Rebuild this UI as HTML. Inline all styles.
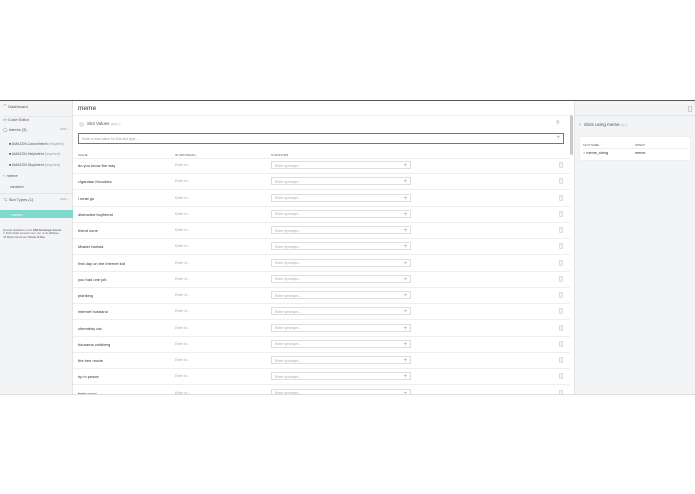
<!DOCTYPE html>
<html><head><meta charset="utf-8"><style>
*{margin:0;padding:0;box-sizing:border-box}
body{width:695px;height:494px;background:#fff;position:relative;overflow:hidden;font-family:"Liberation Sans",sans-serif;color:#333}
.a{position:absolute;white-space:nowrap}
#app{position:absolute;left:0;top:100px;width:695px;height:295px;overflow:hidden;border-top:1.5px solid #555;border-bottom:1px solid #ddd}
#side{position:absolute;left:0;top:0;width:73px;height:295px;background:#f3f4f6;border-right:1px solid #e4e4e4}
#main{position:absolute;left:73px;top:0;width:497px;height:295px;background:#fff}
#sb{position:absolute;left:570px;top:14px;width:3px;height:40px;background:#c8c8c8;border-radius:2px}
#right{position:absolute;left:574px;top:0;width:121px;height:295px;background:#f3f4f6;border-left:1px solid #e4e4e4}
.s{font-size:4px;color:#555}
.row{position:absolute;left:73px;width:497px;height:16px;border-bottom:1px solid #eee}
.v{position:absolute;left:5px;top:5px;font-size:4px;color:#333}
.id{position:absolute;left:102px;top:5px;font-size:3.5px;color:#aaa}
.syn{position:absolute;left:198px;top:3px;width:140px;height:8px;border:1px solid #ddd;font-size:3.5px;color:#aaa;padding:1.5px 0 0 3px}
.syn b{position:absolute;right:3px;top:1px;font-weight:normal;font-size:6px;color:#999;line-height:6px}
.tr{position:absolute;left:486px;top:4px;width:4px;height:6px;border:1px solid #ddd;background:#f4f4f4;border-radius:0 0 1px 1px}
</style></head><body>
<div id="app">
<div id="side">
<div class="a s" style="left:3px;top:3px">⌒ Dashboard</div>
<div class="a s" style="left:3px;top:15px;border-top:1px solid #e8e8e8;width:70px;padding-top:0">‹/› Code Editor</div>
<div class="a s" style="left:3px;top:26px">◯ Intents (3)</div>
<div class="a s" style="left:60px;top:26px;font-size:3px;color:#999">ADD +</div>
<div class="a s" style="left:9px;top:41px;font-size:3.5px">■ AMAZON.CancelIntent <span style="color:#999">(required)</span></div>
<div class="a s" style="left:9px;top:51px;font-size:3.5px">■ AMAZON.HelpIntent <span style="color:#999">(required)</span></div>
<div class="a s" style="left:9px;top:62px;font-size:3.5px">■ AMAZON.StopIntent <span style="color:#999">(required)</span></div>
<div class="a s" style="left:3px;top:72px">›&nbsp; meme</div>
<div class="a s" style="left:10px;top:83px">random</div>
<div class="a" style="left:0;top:92px;width:73px;border-top:1px solid #e4e4e4"></div>
<div class="a s" style="left:3px;top:96px">⌥ Slot Types (1)</div>
<div class="a s" style="left:60px;top:96px;font-size:3px;color:#999">ADD +</div>
<div class="a" style="left:0;top:109px;width:73px;height:8px;background:#7fd8cc"></div>
<div class="a s" style="left:9px;top:111px;color:#fff">› meme</div>
<div class="a" style="left:3px;top:128px;font-size:2.7px;color:#666;line-height:3.3px">Provide feedback on the <b>ASK Developer Forum</b><br>© 2010-2018, Amazon.com, Inc. or its affiliates.<br>All Rights Reserved. <b>Terms of Use</b></div>
</div>
<div id="main">
<div class="a" style="left:5px;top:4px;font-size:6.5px;color:#333">meme</div>
<div class="a" style="left:0;top:14px;width:497px;border-top:1px solid #eee"></div>
<div class="a" style="left:6px;top:21px;width:5px;height:5px;border-radius:50%;background:#e3e3e3"></div>
<div class="a s" style="left:14px;top:20px;font-size:4.5px">Slot Values <span style="font-size:3px;color:#999">(114) ⓘ</span></div>
<div class="a" style="left:483px;top:19px;font-size:5px;color:#999">⚲</div>
<div class="a" style="left:5px;top:32px;width:486px;height:11px;border:1px solid #777;font-size:3.5px;color:#999;padding:3px 0 0 3px">Enter a new value for this slot type...<span style="position:absolute;right:3px;top:1px;font-size:6px">+</span></div>
<div class="a" style="left:5px;top:52px;font-size:3px;color:#555">VALUE</div>
<div class="a" style="left:102px;top:52px;font-size:3px;color:#555">ID (OPTIONAL)</div>
<div class="a" style="left:198px;top:52px;font-size:3px;color:#555">SYNONYMS</div>
<div class="a" style="left:0;top:57px;width:497px;border-top:1px solid #eee"></div>
</div>
<div id="sb"></div>
<div id="right">
<div class="a" style="left:113px;top:5px;width:4px;height:6px;border:1px solid #ccc"></div>
<div class="a" style="left:0;top:14px;width:121px;border-top:1px solid #e4e4e4"></div>
<div class="a s" style="left:4px;top:21px;font-size:4.5px"><span style="color:#aaa">⊧</span>&nbsp; Slots using meme <span style="font-size:3px;color:#999">(1) ⓘ</span></div>
<div class="a" style="left:4px;top:35px;width:112px;height:25px;background:#fff;border:1px solid #eee"></div>
<div class="a" style="left:8px;top:42px;font-size:2.8px;color:#555">SLOT NAME</div>
<div class="a" style="left:60px;top:42px;font-size:2.8px;color:#555">INTENT</div>
<div class="a" style="left:8px;top:47px;width:104px;border-top:1px solid #eee"></div>
<div class="a" style="left:8px;top:50px;font-size:3.8px;color:#333"><span style="color:#9cc">●</span> meme_string</div>
<div class="a" style="left:60px;top:50px;font-size:3.8px;color:#333">meme</div>
</div>
</div>
<div id="rows"></div>
<script>
var v=["do you know the way","Ugandan Knuckles","i must go","distracted boyfriend","friend zone","Master barista","first day on the internet kid","you had one job","planking","internet husband","chemistry cat","futurama zoidberg","the bee movie","rip in peace","feels good"];
var h="";
for(var i=0;i<v.length;i++){var t=100+58+i*16.25;
h+='<div class="row" style="top:'+t+'px"><div class="v">'+v[i]+'</div><div class="id">Enter id...</div><div class="syn">Enter synonym...<b>+</b></div><div class="tr"></div></div>';}
var r=document.getElementById("rows");r.innerHTML=h;
r.style.cssText="position:absolute;left:0;top:0;width:695px;height:395px;overflow:hidden";
</script>
<div style="position:absolute;left:0;top:394px;width:695px;height:100px;background:#fff;border-top:1px solid #ddd"></div>
</body></html>
